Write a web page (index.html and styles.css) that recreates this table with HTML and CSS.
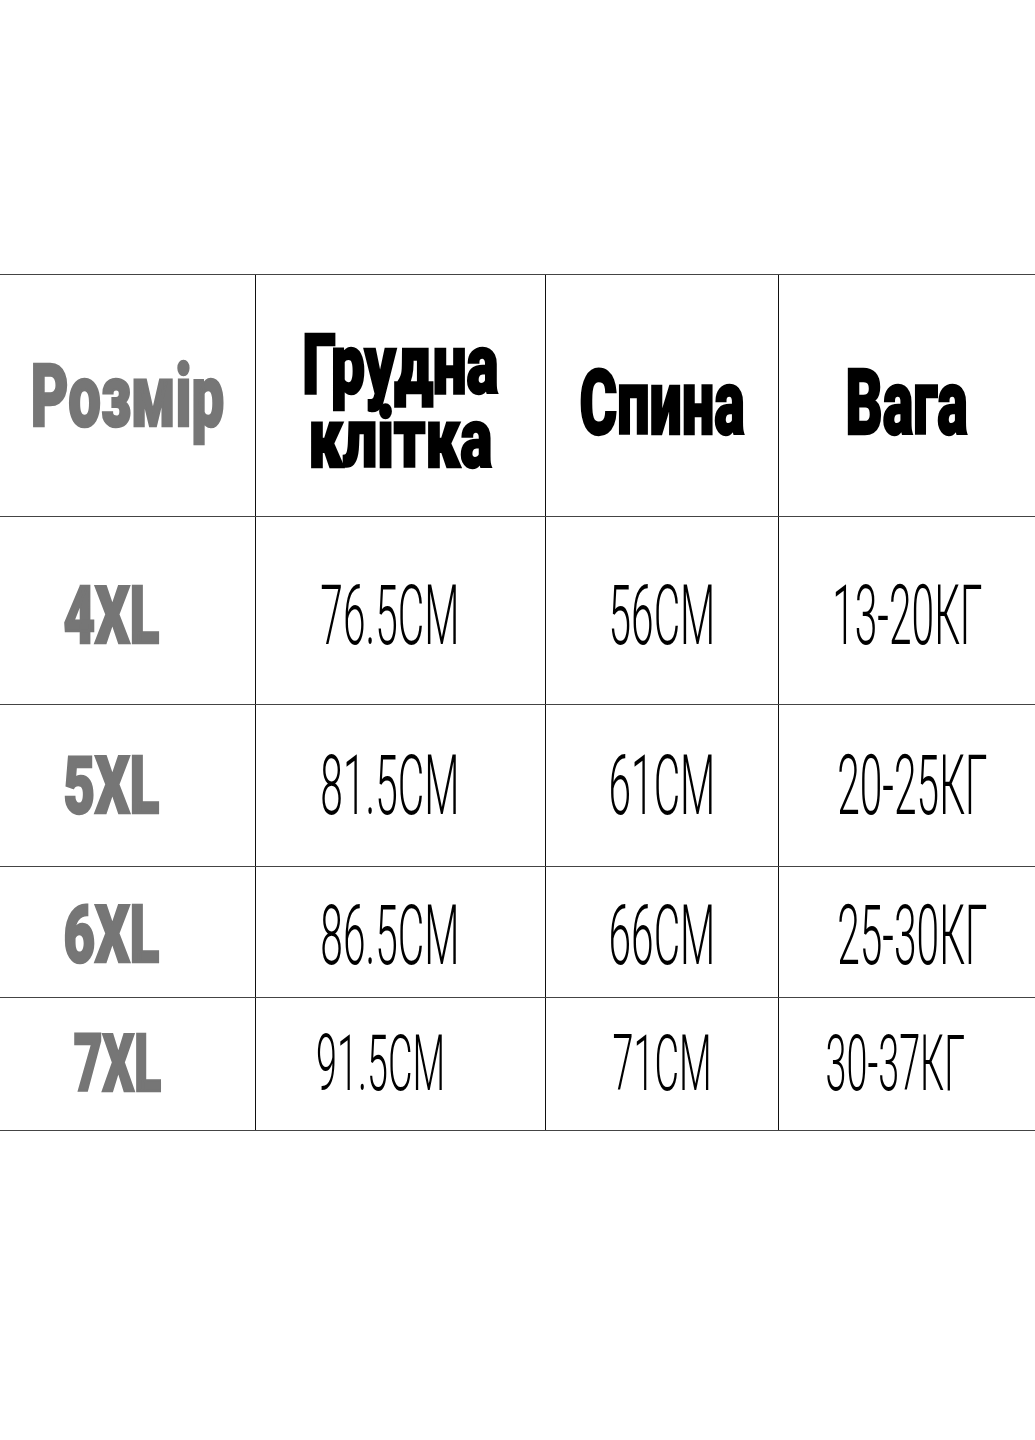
FILE: index.html
```html
<!DOCTYPE html>
<html lang="uk">
<head>
<meta charset="utf-8">
<title>Розмірна сітка</title>
<link rel="stylesheet" href="styles.css">
</head>
<body>
<div class="page">
  <div class="table">
    <div class="row row-head">
      <div class="cell first"><span class="head gray">Розмір</span></div>
      <div class="cell"><span class="head two">Грудна<br>клітка</span></div>
      <div class="cell"><span class="head">Спина</span></div>
      <div class="cell"><span class="head">Вага</span></div>
    </div>
    <div class="row row-1">
      <div class="cell first"><span class="size">4XL</span></div>
      <div class="cell c2"><span class="num">76.5CM</span></div>
      <div class="cell"><span class="num">56CM</span></div>
      <div class="cell"><span class="num">13-20КГ</span></div>
    </div>
    <div class="row row-2">
      <div class="cell first"><span class="size">5XL</span></div>
      <div class="cell c2"><span class="num">81.5CM</span></div>
      <div class="cell"><span class="num">61CM</span></div>
      <div class="cell c4"><span class="num">20-25КГ</span></div>
    </div>
    <div class="row row-3">
      <div class="cell first"><span class="size">6XL</span></div>
      <div class="cell c2"><span class="num">86.5CM</span></div>
      <div class="cell"><span class="num">66CM</span></div>
      <div class="cell c4"><span class="num">25-30КГ</span></div>
    </div>
    <div class="row row-4">
      <div class="cell first"><span class="size small">7XL</span></div>
      <div class="cell c2 c2b"><span class="num small">91.5CM</span></div>
      <div class="cell"><span class="num small">71CM</span></div>
      <div class="cell c4b"><span class="num small">30-37КГ</span></div>
    </div>
  </div>
</div>
</body>
</html>
```

FILE: styles.css
```css
html, body {
  margin: 0;
  padding: 0;
  background: #ffffff;
}

.page {
  width: 1035px;
  height: 1440px;
  padding-top: 274px;
  box-sizing: border-box;
}

.table {
  display: flex;
  flex-direction: column;
  border-bottom: 1px solid #444444;
}

.row {
  display: grid;
  grid-template-columns: 255px 290px 233px 257px;
  border-top: 1px solid #444444;
  box-sizing: border-box;
}

.row-head { height: 242px; }
.row-1 { height: 188px; }
.row-2 { height: 162px; }
.row-3 { height: 131px; }
.row-4 { height: 133px; }

.cell {
  display: flex;
  align-items: center;
  justify-content: center;
  border-left: 1px solid #111111;
  overflow: visible;
  min-width: 0;
}

.cell.first {
  border-left: none;
}

.head {
  display: inline-block;
  font-family: Roboto, "Liberation Sans", sans-serif;
  font-weight: 900;
  font-size: 90px;
  line-height: 1;
  color: #000000;
  white-space: nowrap;
  text-align: center;
  transform: scaleX(0.64);
  -webkit-text-stroke: 2.5px currentColor;
  margin-top: 16px;
}

.head.gray {
  color: #767676;
  margin-top: 0;
  font-size: 88px;
  transform: scaleX(0.66);
}

.head.two {
  font-size: 84px;
  line-height: 74px;
  margin-top: 12px;
  transform: scaleX(0.72);
}

.size {
  display: inline-block;
  font-family: Roboto, "Liberation Sans", sans-serif;
  font-weight: 900;
  font-size: 80px;
  line-height: 1;
  color: #767676;
  transform: scaleX(0.68);
  -webkit-text-stroke: 2.5px currentColor;
  margin-right: 32px;
}

.size.small {
  transform: scaleX(0.62);
  margin-right: 20px;
}

.num {
  display: inline-block;
  font-family: Roboto, "Liberation Sans", sans-serif;
  font-weight: 300;
  font-size: 83px;
  line-height: 1;
  color: #000000;
  white-space: nowrap;
  transform: scaleX(0.49);
}

.num.small {
  font-size: 77px;
}

.row-1 .cell { padding-top: 10px; }
.row-3 .cell { padding-top: 6px; }

.c2 { padding-right: 22px; }
.c2b { padding-right: 40px; }
.c4 { padding-left: 10px; }
.c4b { padding-right: 24px; }
```
